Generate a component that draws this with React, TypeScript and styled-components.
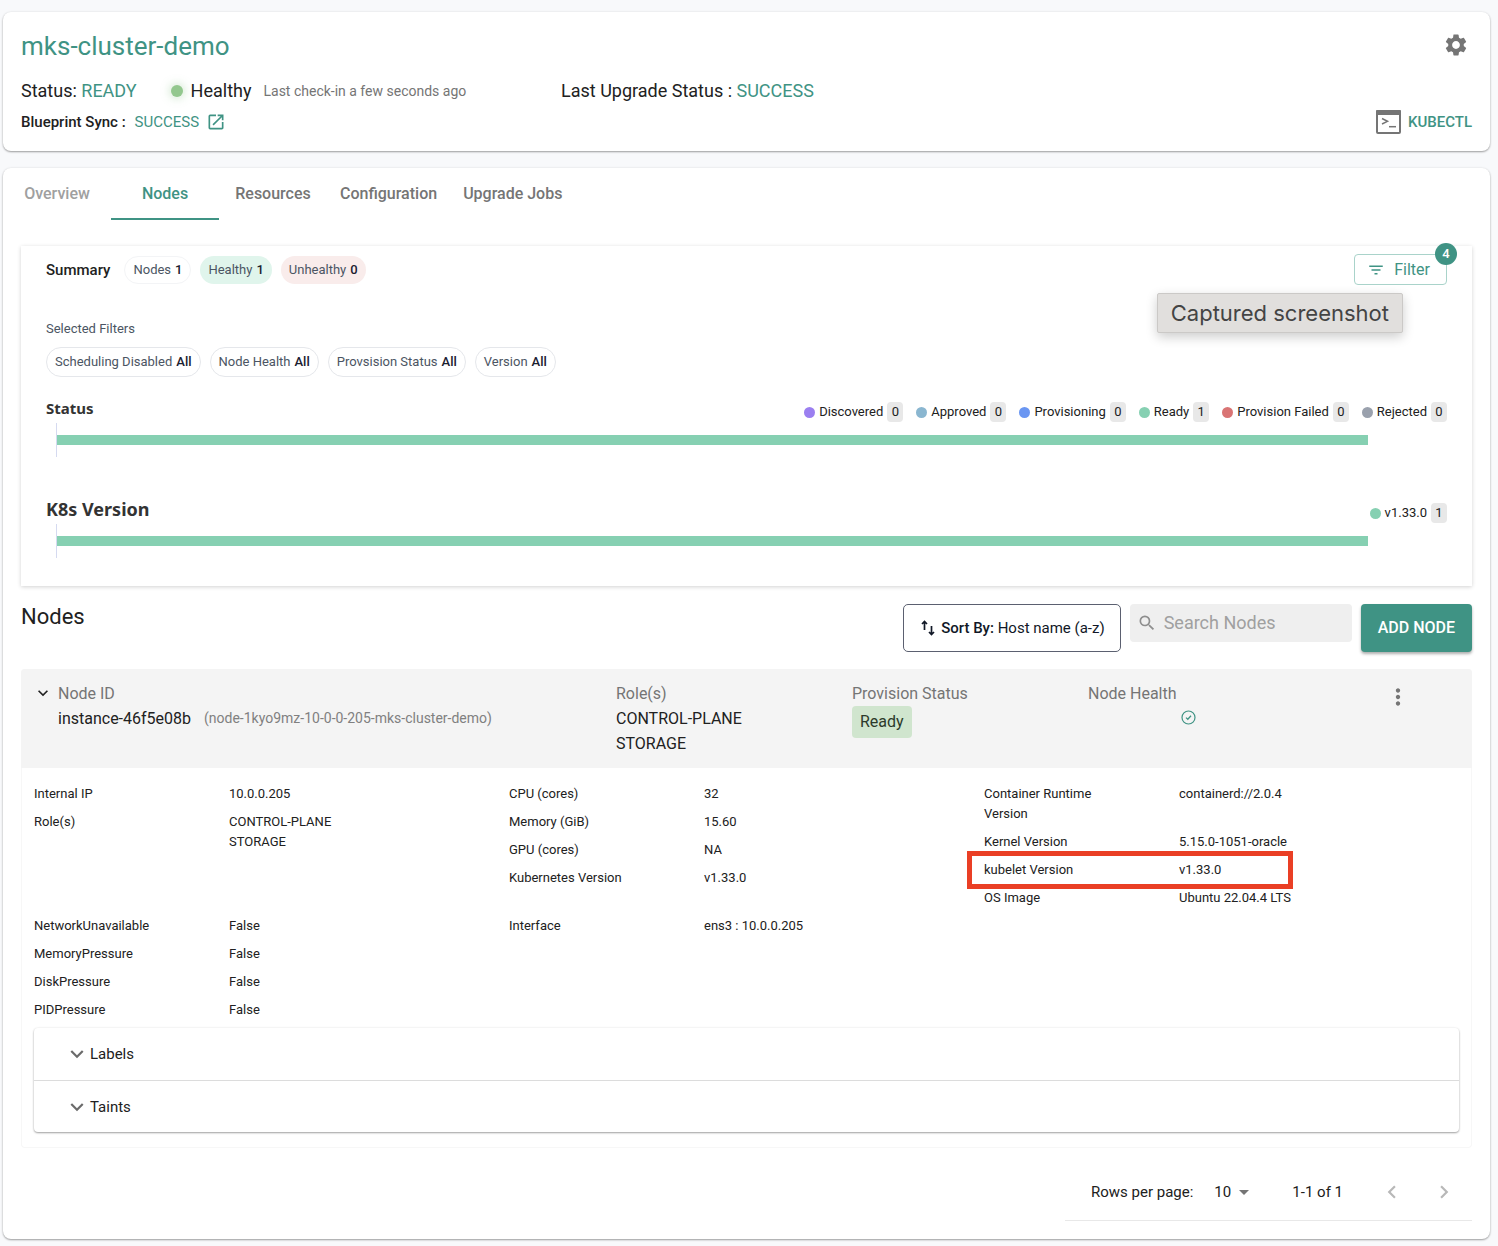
import React from "react";
import styled, { createGlobalStyle } from "styled-components";
import {
  MdArrowDropDown,
  MdChevronLeft,
  MdChevronRight,
  MdExpandMore,
  MdFilterList,
  MdMoreVert,
  MdOpenInNew,
  MdSearch,
  MdSettings,
} from "react-icons/md";

const teal = "#3f9384";
const ink = "#212121";
const muted = "#757575";
const slate = "#4b5563";

const GlobalStyle = createGlobalStyle`
  *, *::before, *::after { box-sizing: border-box; }
  body {
    margin: 0;
    background: #f8f9fb;
    color: ${ink};
    font-family: Roboto, "Liberation Sans", sans-serif;
    font-size: 16px;
    line-height: 24px;
  }
  h1, h2, h3, p, dl, dd, ul { margin: 0; padding: 0; }
  button, input, select { font: inherit; color: inherit; }
  button { cursor: pointer; }
  a { text-decoration: none; color: ${teal}; }
  svg { display: block; flex: none; }
`;

const Page = styled.main`
  display: flex;
  flex-direction: column;
  gap: 17px;
  padding: 12px 8px 7px 3px;
`;

const Card = styled.section`
  background: #fff;
  border-radius: 8px;
  box-shadow: 0 1px 2px rgba(0, 0, 0, 0.36), 0 0 3px rgba(0, 0, 0, 0.06);
`;

const HeaderCard = styled(Card)`
  display: flex;
  justify-content: space-between;
  padding: 17px 18px;
`;

const HeaderInfo = styled.div`
  flex: 1;
`;

const HeaderActions = styled.div`
  display: flex;
  flex-direction: column;
  justify-content: space-between;
  align-items: flex-end;
`;

const ClusterName = styled.h1`
  font-size: 26px;
  line-height: 34px;
  font-weight: 400;
  color: ${teal};
`;

const StatusRow = styled.div`
  display: flex;
  align-items: center;
  margin-top: 16px;
  font-size: 18px;
`;

const StatusGroup = styled.div`
  display: flex;
  align-items: center;
  flex: 0 0 540px;
`;

const Accent = styled.span`
  color: ${teal};
`;

const HealthDot = styled.span`
  width: 12px;
  height: 12px;
  margin: 0 8px 0 34px;
  border-radius: 50%;
  background: #93c78e;
  box-shadow: 0 0 8px 2px rgba(147, 199, 142, 0.35);
`;

const CheckIn = styled.span`
  margin-left: 12px;
  font-size: 14px;
  color: ${muted};
`;

const BlueprintRow = styled.div`
  display: flex;
  align-items: center;
  gap: 9px;
  margin-top: 7px;
  font-size: 15px;
`;

const Medium = styled.span`
  font-weight: 500;
`;

const BlueprintLink = styled.a`
  display: flex;
  align-items: center;
  gap: 7px;
`;

const IconButton = styled.button<{ $tone?: string; $size?: number }>`
  display: flex;
  align-items: center;
  justify-content: center;
  width: ${(p) => p.$size ?? 32}px;
  height: ${(p) => p.$size ?? 32}px;
  padding: 0;
  border: 0;
  background: none;
  color: ${(p) => p.$tone ?? muted};
`;

const KubectlButton = styled.button`
  display: flex;
  align-items: center;
  gap: 7px;
  height: 24px;
  padding: 0;
  border: 0;
  background: none;
  color: ${teal};
  font-size: 15px;
  font-weight: 500;
`;

const MainCard = styled(Card)`
  padding-bottom: 18px;
`;

const Tabs = styled.nav`
  display: flex;
`;

const Tab = styled.button<{ $active?: boolean; $faded?: boolean }>`
  min-width: 108px;
  height: 52px;
  padding: 2px 13px 0;
  border: 0;
  border-bottom: 2px solid ${(p) => (p.$active ? teal : "transparent")};
  background: none;
  color: ${(p) => (p.$active ? teal : p.$faded ? "#a0a0a0" : muted)};
  font-size: 16px;
  font-weight: 500;
`;

const Body = styled.div`
  padding: 26px 18px 0;
`;

const SummaryPanel = styled.section`
  position: relative;
  padding: 8px 25px 28px;
  box-shadow: 0 1px 4px rgba(0, 0, 0, 0.18);
`;

const SummaryHead = styled.div`
  display: flex;
  align-items: center;
  justify-content: space-between;
  height: 31px;
`;

const ChipRow = styled.div`
  display: flex;
  align-items: center;
  gap: 9px;
`;

const SummaryTitle = styled.h2`
  margin-right: 5px;
  font-size: 15px;
  font-weight: 500;
`;

const Chip = styled.span<{ $fill?: string; $line?: string; $tall?: boolean }>`
  display: inline-flex;
  align-items: center;
  gap: 4px;
  height: ${(p) => (p.$tall ? 30 : 28)}px;
  padding: 0 8px;
  border: ${(p) => (p.$line ? `1px solid ${p.$line}` : "0")};
  border-radius: 15px;
  background: ${(p) => p.$fill ?? "#fff"};
  color: ${slate};
  font-size: 13px;

  b {
    color: #1a2030;
    font-weight: 500;
  }
`;

const FilterButton = styled.button`
  position: relative;
  display: flex;
  align-items: center;
  gap: 9px;
  height: 31px;
  padding: 0 16px 0 12px;
  border: 1px solid #a9d3ca;
  border-radius: 4px;
  background: #fff;
  color: ${teal};
  font-size: 16px;
`;

const Badge = styled.span`
  position: absolute;
  top: -12px;
  right: -11px;
  width: 22px;
  height: 22px;
  border-radius: 50%;
  background: ${teal};
  color: #fff;
  font-size: 13px;
  font-weight: 500;
  line-height: 22px;
  text-align: center;
`;

const CaptureToast = styled.div`
  position: absolute;
  top: 47px;
  right: 69px;
  padding: 0 13px;
  border: 1px solid #cbc9c7;
  border-radius: 2px;
  background: #e1dfdd;
  box-shadow: 0 4px 12px rgba(0, 0, 0, 0.2);
  color: #444;
  font-family: Inter, Roboto, sans-serif;
  font-size: 22px;
  line-height: 38px;
`;

const FilterLabel = styled.p`
  margin: 32px 0 6px;
  color: ${slate};
  font-size: 13px;
`;

const Chart = styled.section<{ $gap: number }>`
  margin-top: ${(p) => p.$gap}px;
`;

const ChartHead = styled.div`
  display: flex;
  align-items: flex-start;
  justify-content: space-between;
  height: 24px;
`;

const ChartTitle = styled.h3<{ $large?: boolean }>`
  color: #333;
  font-family: "Noto Sans", "Open Sans", sans-serif;
  font-size: ${(p) => (p.$large ? 18 : 15)}px;
  font-weight: 700;
  line-height: 18px;
`;

const Legend = styled.ul`
  display: flex;
  gap: 13px;
  padding-top: 1px;
  list-style: none;
  font-size: 13px;
`;

const LegendItem = styled.li`
  display: flex;
  align-items: center;
  gap: 4px;
  height: 24px;
`;

const LegendDot = styled.span<{ $color: string }>`
  width: 11px;
  height: 11px;
  border-radius: 50%;
  background: ${(p) => p.$color};
`;

const Count = styled.span`
  min-width: 16px;
  border-radius: 4px;
  background: #e8e8e8;
  line-height: 20px;
  text-align: center;
`;

const Axis = styled.div`
  display: flex;
  align-items: center;
  height: 34px;
  margin: 0 79px 0 10px;
  border-left: 1px solid #d5daf0;
`;

const Bar = styled.div<{ $color: string }>`
  height: 10px;
  flex: 1;
  background: ${(p) => p.$color};
`;

const Toolbar = styled.div`
  display: flex;
  align-items: flex-start;
  justify-content: space-between;
  margin: 18px 0 17px;
`;

const SectionTitle = styled.h2`
  font-size: 22px;
  line-height: 26px;
  font-weight: 400;
`;

const Tools = styled.div`
  display: flex;
  align-items: flex-start;
  gap: 9px;
`;

const SortButton = styled.button`
  display: flex;
  align-items: center;
  gap: 4px;
  height: 48px;
  padding: 0 15px;
  border: 1px solid #5b6070;
  border-radius: 5px;
  background: #fff;
  color: #111827;
  font-size: 15px;

  b {
    font-weight: 500;
  }
`;

const SearchBox = styled.label`
  display: flex;
  align-items: center;
  gap: 7px;
  width: 222px;
  height: 38px;
  padding: 0 7px;
  border-radius: 4px;
  background: #efefef;
  color: #8e8e8e;

  input {
    flex: 1;
    min-width: 0;
    padding: 0;
    border: 0;
    outline: 0;
    background: none;
    font-size: 18px;
  }

  input::placeholder {
    color: #a0a0a0;
    opacity: 1;
  }
`;

const AddButton = styled.button`
  height: 48px;
  padding: 0 17px;
  border: 0;
  border-radius: 4px;
  background: ${teal};
  box-shadow: 0 2px 3px rgba(0, 0, 0, 0.32);
  color: #fff;
  font-size: 16px;
  font-weight: 500;
`;

const NodeCard = styled.article`
  border-radius: 4px;
  box-shadow: inset 0 0 0 1px #f7f7f7;
`;

const NodeHead = styled.header`
  display: grid;
  grid-template-columns: 558fr 236fr 236fr 236fr 148fr;
  padding: 12px 0 12px 37px;
  border-radius: 4px 4px 0 0;
  background: #f4f4f4;
  line-height: 25px;
`;

const HeadCell = styled.div`
  position: relative;
`;

const HeadLabel = styled.div`
  color: ${muted};
`;

const ExpandButton = styled(IconButton)`
  position: absolute;
  top: 2px;
  left: -25px;
`;

const NodeName = styled.div`
  display: flex;
  gap: 13px;

  small {
    color: #808080;
    font-size: 14px;
  }
`;

const ReadyTag = styled.span`
  display: inline-block;
  padding: 0 8px;
  border-radius: 4px;
  background: #d0e5ce;
  color: #2c3a2b;
  line-height: 32px;
`;

const HealthMark = styled.div`
  display: flex;
  justify-content: center;
  padding: 4px 36px 0 0;
`;

const MenuCell = styled.div`
  display: flex;
  justify-content: center;
`;

const Details = styled.div`
  padding: 12px 13px 16px;
`;

const DetailGrid = styled.div`
  display: grid;
  grid-template-columns: repeat(3, 1fr);
`;

const Fields = styled.dl`
  font-size: 13px;
  line-height: 20px;
`;

const Field = styled.div`
  position: relative;
  display: grid;
  grid-template-columns: 195fr 280fr;
  padding: 4px 0;

  dt {
    padding-right: 64px;
  }

  dd {
    white-space: pre-line;
  }
`;

const Highlight = styled.span`
  position: absolute;
  top: -5px;
  bottom: -5px;
  left: -17px;
  width: 326px;
  border: 5px solid #ea3f25;
  pointer-events: none;
`;

const Accordion = styled.div`
  margin-top: 4px;
  border-radius: 4px;
  box-shadow: 0 1px 2px rgba(0, 0, 0, 0.36), 0 0 3px rgba(0, 0, 0, 0.06);
`;

const AccordionRow = styled.button`
  display: flex;
  align-items: center;
  width: 100%;
  height: 52px;
  padding: 0 30px;
  border: 0;
  background: none;
  font-size: 15px;

  & + & {
    border-top: 1px solid #dcdcdc;
  }

  svg {
    color: #6b6b6b;
  }
`;

const Pagination = styled.footer`
  display: flex;
  align-items: center;
  width: fit-content;
  height: 57px;
  margin: 16px 0 0 auto;
  padding: 0 12px 0 26px;
  border-bottom: 1px solid #e8e8e8;
  font-size: 15px;
`;

const PageSize = styled.label`
  display: flex;
  align-items: center;
  gap: 21px;
`;

const SelectWrap = styled.span`
  position: relative;
  display: flex;

  select {
    width: 42px;
    padding: 0;
    border: 0;
    outline: 0;
    appearance: none;
    background: none;
  }

  svg {
    position: absolute;
    top: 0;
    right: 0;
    color: ${muted};
    pointer-events: none;
  }
`;

const PageRange = styled.span`
  margin: 0 33px 0 36px;
`;

const PageButtons = styled.div`
  display: flex;
  gap: 20px;
`;

const TerminalIcon = () => (
  <svg width="25" height="24" viewBox="0 0 25 24" aria-hidden="true">
    <rect x="1" y="1" width="23" height="22" rx="1" fill="#fff" stroke="#757575" strokeWidth="2" />
    <rect x="0" y="0" width="25" height="5" rx="1" fill="#757575" />
    <path d="M6 8.5l5.5 2.8L6 14" fill="none" stroke="#757575" strokeWidth="1.5" />
    <path d="M13 16.7h7" stroke="#757575" strokeWidth="1.5" />
  </svg>
);

const SortIcon = () => (
  <svg width="18" height="18" viewBox="0 0 18 18" aria-hidden="true">
    <path
      d="M5.5 11V3M3 5l2.5-2.5L8 5M12.5 7v8M10 13l2.5 2.5L15 13"
      fill="none"
      stroke="#111827"
      strokeWidth="1.7"
    />
  </svg>
);

const CheckCircle = () => (
  <svg width="15" height="15" viewBox="0 0 15 15" role="img" aria-label="Healthy">
    <circle cx="7.5" cy="7.5" r="6.5" fill="none" stroke={teal} strokeWidth="1.2" />
    <path d="M5 7.6l1.8 1.7L10 5.8" fill="none" stroke={teal} strokeWidth="1.3" />
  </svg>
);

const filters = ["Scheduling Disabled", "Node Health", "Provsision Status", "Version"];

const statuses = [
  { name: "Discovered", count: 0, color: "#9b7ff0" },
  { name: "Approved", count: 0, color: "#8ab6d0" },
  { name: "Provisioning", count: 0, color: "#6a96f2" },
  { name: "Ready", count: 1, color: "#86d0b2" },
  { name: "Provision Failed", count: 0, color: "#d97474" },
  { name: "Rejected", count: 0, color: "#9aa1ad" },
];

const versions = [{ name: "v1.33.0", count: 1, color: "#86d0b2" }];

type Entry = { label: string; value: string; marked?: boolean };

const specs: Entry[][] = [
  [
    { label: "Internal IP", value: "10.0.0.205" },
    { label: "Role(s)", value: "CONTROL-PLANE\nSTORAGE" },
  ],
  [
    { label: "CPU (cores)", value: "32" },
    { label: "Memory (GiB)", value: "15.60" },
    { label: "GPU (cores)", value: "NA" },
    { label: "Kubernetes Version", value: "v1.33.0" },
  ],
  [
    { label: "Container Runtime Version", value: "containerd://2.0.4" },
    { label: "Kernel Version", value: "5.15.0-1051-oracle" },
    { label: "kubelet Version", value: "v1.33.0", marked: true },
    { label: "OS Image", value: "Ubuntu 22.04.4 LTS" },
  ],
];

const conditions: Entry[][] = [
  [
    { label: "NetworkUnavailable", value: "False" },
    { label: "MemoryPressure", value: "False" },
    { label: "DiskPressure", value: "False" },
    { label: "PIDPressure", value: "False" },
  ],
  [{ label: "Interface", value: "ens3 : 10.0.0.205" }],
];

const DetailSection = ({ columns }: { columns: Entry[][] }) => (
  <DetailGrid>
    {columns.map((entries) => (
      <Fields key={entries[0].label}>
        {entries.map((e) => (
          <Field key={e.label}>
            <dt>{e.label}</dt>
            <dd>
              {e.value}
              {e.marked && <Highlight />}
            </dd>
          </Field>
        ))}
      </Fields>
    ))}
  </DetailGrid>
);

const ChartLegend = ({ items }: { items: typeof statuses }) => (
  <Legend>
    {items.map((s) => (
      <LegendItem key={s.name}>
        <LegendDot $color={s.color} />
        {s.name}
        <Count>{s.count}</Count>
      </LegendItem>
    ))}
  </Legend>
);

const StackedBar = ({ items }: { items: typeof statuses }) => (
  <Axis>
    {items
      .filter((s) => s.count > 0)
      .map((s) => (
        <Bar key={s.name} $color={s.color} style={{ flexGrow: s.count }} />
      ))}
  </Axis>
);

export default function App() {
  return (
    <>
      <GlobalStyle />
      <Page>
        <HeaderCard>
          <HeaderInfo>
            <ClusterName>mks-cluster-demo</ClusterName>
            <StatusRow>
              <StatusGroup>
                <span>
                  Status: <Accent>READY</Accent>
                </span>
                <HealthDot />
                <span>Healthy</span>
                <CheckIn>Last check-in a few seconds ago</CheckIn>
              </StatusGroup>
              <span>
                Last Upgrade Status : <Accent>SUCCESS</Accent>
              </span>
            </StatusRow>
            <BlueprintRow>
              <Medium>Blueprint Sync :</Medium>
              <BlueprintLink href="#blueprint">
                SUCCESS
                <MdOpenInNew size={20} />
              </BlueprintLink>
            </BlueprintRow>
          </HeaderInfo>
          <HeaderActions>
            <IconButton aria-label="Cluster settings">
              <MdSettings size={26} />
            </IconButton>
            <KubectlButton>
              <TerminalIcon />
              KUBECTL
            </KubectlButton>
          </HeaderActions>
        </HeaderCard>

        <MainCard>
          <Tabs>
            <Tab $faded>Overview</Tab>
            <Tab $active>Nodes</Tab>
            <Tab>Resources</Tab>
            <Tab>Configuration</Tab>
            <Tab>Upgrade Jobs</Tab>
          </Tabs>

          <Body>
            <SummaryPanel>
              <SummaryHead>
                <ChipRow>
                  <SummaryTitle>Summary</SummaryTitle>
                  <Chip $line="#f3f4f6">
                    Nodes <b>1</b>
                  </Chip>
                  <Chip $fill="#e0f5ec">
                    Healthy <b>1</b>
                  </Chip>
                  <Chip $fill="#f9eceb">
                    Unhealthy <b>0</b>
                  </Chip>
                </ChipRow>
                <FilterButton>
                  <MdFilterList size={18} />
                  Filter
                  <Badge>4</Badge>
                </FilterButton>
              </SummaryHead>
              <CaptureToast role="status">Captured screenshot</CaptureToast>

              <FilterLabel>Selected Filters</FilterLabel>
              <ChipRow>
                {filters.map((name) => (
                  <Chip key={name} $line="#e5e7eb" $tall>
                    {name} <b>All</b>
                  </Chip>
                ))}
              </ChipRow>

              <Chart $gap={22}>
                <ChartHead>
                  <ChartTitle>Status</ChartTitle>
                  <ChartLegend items={statuses} />
                </ChartHead>
                <StackedBar items={statuses} />
              </Chart>
              <Chart $gap={43}>
                <ChartHead>
                  <ChartTitle $large>K8s Version</ChartTitle>
                  <ChartLegend items={versions} />
                </ChartHead>
                <StackedBar items={versions} />
              </Chart>
            </SummaryPanel>

            <Toolbar>
              <SectionTitle>Nodes</SectionTitle>
              <Tools>
                <SortButton>
                  <SortIcon />
                  <span>
                    <b>Sort By:</b> Host name (a-z)
                  </span>
                </SortButton>
                <SearchBox>
                  <MdSearch size={20} />
                  <input type="search" placeholder="Search Nodes" aria-label="Search Nodes" />
                </SearchBox>
                <AddButton>ADD NODE</AddButton>
              </Tools>
            </Toolbar>

            <NodeCard>
              <NodeHead>
                <HeadCell>
                  <ExpandButton $size={20} $tone={ink} aria-label="Collapse node">
                    <MdExpandMore size={20} />
                  </ExpandButton>
                  <HeadLabel>Node ID</HeadLabel>
                  <NodeName>
                    instance-46f5e08b
                    <small>(node-1kyo9mz-10-0-0-205-mks-cluster-demo)</small>
                  </NodeName>
                </HeadCell>
                <HeadCell>
                  <HeadLabel>Role(s)</HeadLabel>
                  <div>CONTROL-PLANE</div>
                  <div>STORAGE</div>
                </HeadCell>
                <HeadCell>
                  <HeadLabel>Provision Status</HeadLabel>
                  <ReadyTag>Ready</ReadyTag>
                </HeadCell>
                <HeadCell>
                  <HeadLabel>Node Health</HeadLabel>
                  <HealthMark>
                    <CheckCircle />
                  </HealthMark>
                </HeadCell>
                <MenuCell>
                  <IconButton aria-label="Node actions">
                    <MdMoreVert size={26} />
                  </IconButton>
                </MenuCell>
              </NodeHead>

              <Details>
                <DetailSection columns={specs} />
                <DetailSection columns={conditions} />
                <Accordion>
                  <AccordionRow>
                    <MdExpandMore size={26} />
                    Labels
                  </AccordionRow>
                  <AccordionRow>
                    <MdExpandMore size={26} />
                    Taints
                  </AccordionRow>
                </Accordion>
              </Details>
            </NodeCard>

            <Pagination>
              <PageSize>
                Rows per page:
                <SelectWrap>
                  <select defaultValue="10">
                    <option>10</option>
                    <option>25</option>
                    <option>50</option>
                  </select>
                  <MdArrowDropDown size={24} />
                </SelectWrap>
              </PageSize>
              <PageRange>1-1 of 1</PageRange>
              <PageButtons>
                <IconButton $tone="#b8b8b8" aria-label="Previous page">
                  <MdChevronLeft size={26} />
                </IconButton>
                <IconButton $tone="#b8b8b8" aria-label="Next page">
                  <MdChevronRight size={26} />
                </IconButton>
              </PageButtons>
            </Pagination>
          </Body>
        </MainCard>
      </Page>
    </>
  );
}
